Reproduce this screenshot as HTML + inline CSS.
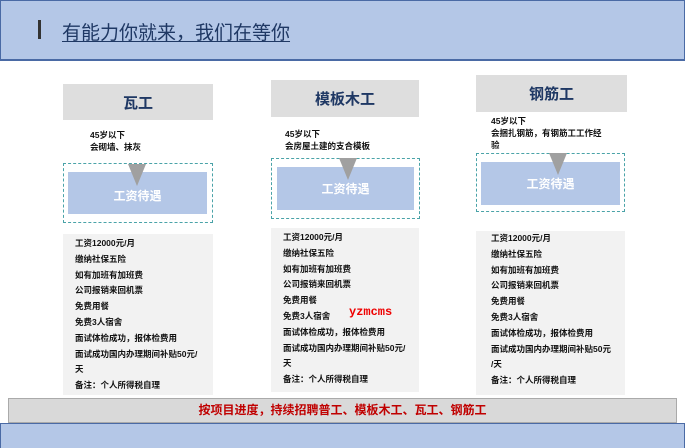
<!DOCTYPE html>
<html><head><meta charset="utf-8"><style>
*{margin:0;padding:0;box-sizing:border-box}
body{width:685px;height:448px;position:relative;background:#fff;font-family:"Liberation Sans","Noto Sans CJK SC",sans-serif;overflow:hidden}
.a{position:absolute}
.hdr{left:0;top:0;width:685px;height:61px;background:#b4c7e7;border:1px solid #4a6aa5;border-bottom:2px solid #4a6aa5}
.bar{left:38px;top:20px;width:3px;height:19px;background:#333}
.title{left:62px;top:18px;font-size:19px;color:#1f3864;text-decoration:underline;text-underline-offset:2px;white-space:nowrap}
.tb{background:#dedede;font-size:15px;font-weight:bold;color:#1f3864;display:flex;align-items:center;justify-content:center}
.req{font-size:8.5px;font-weight:bold;color:#111;line-height:12px}
.dash{border:1.5px dashed #4aa3a8}
.blue{background:#b4c7e7;color:#fff;font-weight:bold;font-size:12px;display:flex;align-items:center;justify-content:center}
.tri{width:0;height:0;border-left:9px solid transparent;border-right:9px solid transparent;border-top:22px solid #a0a0a0}
.list{background:#f2f2f2;font-size:8.5px;font-weight:bold;color:#111;line-height:15.8px;padding:2px 0 0 12px}
</style></head><body>
<div class="a hdr"></div>
<div class="a bar"></div>
<div class="a title">有能力你就来，我们在等你</div>

<div class="a tb" style="left:63px;top:84px;width:150px;height:36px">瓦工</div>
<div class="a tb" style="left:271px;top:80px;width:148px;height:37px">模板木工</div>
<div class="a tb" style="left:476px;top:75px;width:151px;height:37px">钢筋工</div>

<div class="a req" style="left:90px;top:129px">45岁以下<br>会砌墙、抹灰</div>
<div class="a req" style="left:285px;top:128px">45岁以下<br>会房屋土建的支合模板</div>
<div class="a req" style="left:491px;top:115px;width:115px">45岁以下<br>会捆扎钢筋，有钢筋工工作经验</div>

<div class="a dash" style="left:63px;top:163px;width:150px;height:60px"></div>
<div class="a dash" style="left:271px;top:158px;width:149px;height:61px"></div>
<div class="a dash" style="left:476px;top:153px;width:149px;height:59px"></div>
<div class="a blue" style="left:68px;top:172px;width:139px;height:42px;padding-top:4px">工资待遇</div>
<div class="a blue" style="left:277px;top:167px;width:137px;height:43px">工资待遇</div>
<div class="a blue" style="left:481px;top:162px;width:139px;height:43px">工资待遇</div>
<div class="a tri" style="left:128px;top:164px"></div>
<div class="a tri" style="left:339px;top:158px"></div>
<div class="a tri" style="left:549px;top:153px"></div>

<div class="a list" style="left:63px;top:234px;width:150px;height:161px">工资12000元/月<br>缴纳社保五险<br>如有加班有加班费<br>公司报销来回机票<br>免费用餐<br>免费3人宿舍<br>面试体检成功，报体检费用<br>面试成功国内办理期间补贴50元/<br>天<br>备注：个人所得税自理</div>
<div class="a list" style="left:271px;top:228px;width:148px;height:164px">工资12000元/月<br>缴纳社保五险<br>如有加班有加班费<br>公司报销来回机票<br>免费用餐<br>免费3人宿舍<br>面试体检成功，报体检费用<br>面试成功国内办理期间补贴50元/<br>天<br>备注：个人所得税自理</div>
<div class="a list" style="left:476px;top:231px;width:149px;height:164px;padding-left:15px;padding-top:0">工资12000元/月<br>缴纳社保五险<br>如有加班有加班费<br>公司报销来回机票<br>免费用餐<br>免费3人宿舍<br>面试体检成功，报体检费用<br>面试成功国内办理期间补贴50元<br>/天<br>备注：个人所得税自理</div>
<div class="a" style="left:349px;top:305px;color:#e00;font-size:12px;font-family:'Liberation Mono',monospace;font-weight:bold">yzmcms</div>

<div class="a" style="left:8px;top:398px;width:669px;height:25px;background:#d9d9d9;border:1px solid #aaa;color:#c00000;font-size:12px;font-weight:bold;text-align:center;line-height:23px">按项目进度，持续招聘普工、模板木工、瓦工、钢筋工</div>
<div class="a" style="left:0;top:423px;width:685px;height:25px;background:#b4c7e7;border:1px solid #4a6aa5;border-bottom:none"></div>
</body></html>
